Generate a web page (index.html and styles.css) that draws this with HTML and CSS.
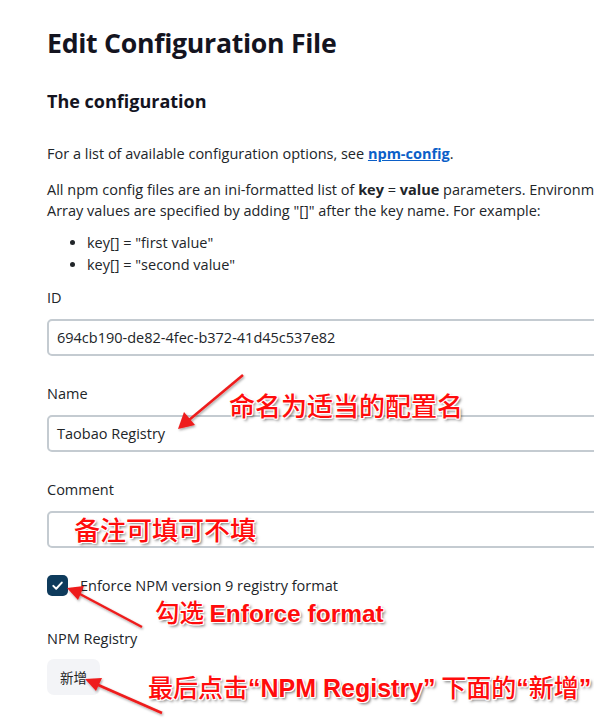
FILE: index.html
```html
<!DOCTYPE html>
<html lang="en">
<head>
<meta charset="utf-8">
<title>Edit Configuration File</title>
<link rel="stylesheet" href="styles.css">
</head>
<body>
<main class="page">
  <h1 class="title">Edit Configuration File</h1>
  <h2 class="subtitle">The configuration</h2>
  <p class="text first">For a list of available configuration options, see <a class="link" href="#">npm-config</a>.</p>
  <p class="text second">All npm config files are an ini-formatted list of <b>key</b> = <b>value</b> parameters. Environment variables can be replaced using ${VARIABLE_NAME} syntax.<br>Array values are specified by adding "[]" after the key name. For example:</p>
  <ul class="list">
    <li>key[] = "first value"</li>
    <li>key[] = "second value"</li>
  </ul>

  <div class="field">
    <label class="label">ID</label>
    <div class="input">694cb190-de82-4fec-b372-41d45c537e82</div>
  </div>
  <div class="field">
    <label class="label">Name</label>
    <div class="input">Taobao Registry</div>
  </div>
  <div class="field">
    <label class="label">Comment</label>
    <div class="input"></div>
  </div>
  <div class="check-row">
    <span class="checkbox"><svg viewBox="0 0 21 21" width="21" height="21"><path d="M6.3 10.9l2.9 2.8 5.6-6.1" fill="none" stroke="#fff" stroke-width="2" stroke-linecap="round" stroke-linejoin="round"/></svg></span>
    <span class="check-label">Enforce NPM version 9 registry format</span>
  </div>
  <div class="field registry">
    <label class="label">NPM Registry</label>
    <button class="btn">新增</button>
  </div>
</main>

<svg class="arrows" width="594" height="722" viewBox="0 0 594 722">
  <defs>
    <filter id="sh" x="-20%" y="-20%" width="140%" height="140%">
      <feDropShadow dx="1" dy="1.5" stdDeviation="1" flood-color="#000" flood-opacity="0.35"/>
    </filter>
  </defs>
  <g fill="#ee1c1c" stroke="#ee1c1c" filter="url(#sh)">
    <line x1="243" y1="375" x2="189" y2="420" stroke-width="2.5"/>
    <polygon points="178,429 184,412 195,425" stroke="none"/>
    <line x1="142" y1="627" x2="78" y2="593" stroke-width="2.5"/>
    <polygon points="67,588 84,586 78,600" stroke="none"/>
    <line x1="162" y1="713" x2="96" y2="684" stroke-width="2.5"/>
    <polygon points="85,679 102,678 96,691" stroke="none"/>
  </g>
</svg>

<div class="note note-name">命名为适当的配置名</div>
<div class="note note-comment">备注可填可不填</div>
<div class="note note-check">勾选 <span class="latin">Enforce format</span></div>
<div class="note note-add">最后点击<span class="latin">“NPM Registry”</span> 下面的<span class="latin">“</span>新增<span class="latin">”</span></div>
</body>
</html>
```
FILE: styles.css
```css
html, body {
  margin: 0;
  padding: 0;
  background: #ffffff;
  overflow: hidden;
}
body {
  width: 594px;
  height: 722px;
  position: relative;
  font-family: "Open Sans", "Noto Sans CJK SC", sans-serif;
  color: #212529;
}
.page {
  padding: 25px 0 0 47px;
  width: 760px;
}
.title {
  margin: 0;
  font-size: 26.7px;
  line-height: 36px;
  font-weight: 700;
  color: #14141f;
  letter-spacing: -0.3px;
}
.subtitle {
  margin: 28px 0 0;
  font-size: 18px;
  line-height: 24px;
  font-weight: 700;
  color: #14141f;
}
.text {
  margin: 0;
  font-size: 14.5px;
  line-height: 21px;
  white-space: nowrap;
}
.text.first {
  margin-top: 29.5px;
}
.text.second {
  margin-top: 15px;
}
.text b {
  font-weight: 700;
}
.link {
  color: #0b5fc8;
  font-weight: 700;
  text-decoration: underline;
}
.list {
  margin: 11.5px 0 0;
  padding-left: 40px;
  font-size: 14.5px;
  line-height: 22px;
}
.field {
  margin-top: 28px;
  display: flex;
  flex-direction: column;
  align-items: flex-start;
}
.list + .field {
  margin-top: 12px;
}
.label {
  font-size: 14.5px;
  line-height: 20px;
  margin-bottom: 11px;
}
.input {
  box-sizing: border-box;
  width: 700px;
  height: 37px;
  border: 2px solid #c4cbd1;
  border-radius: 5px;
  padding: 0 8px;
  font-size: 14.5px;
  line-height: 33px;
}
.check-row {
  display: flex;
  align-items: center;
  gap: 12px;
  margin-top: 27px;
}
.checkbox {
  width: 21px;
  height: 21px;
  border-radius: 5px;
  background: #0e3b5c;
  display: flex;
}
.check-label {
  font-size: 14.5px;
  line-height: 20px;
}
.field.registry {
  margin-top: 33px;
}
.registry .label {
  margin-bottom: 10px;
}
.btn {
  box-sizing: border-box;
  height: 36px;
  width: 53px;
  padding: 0;
  border: none;
  border-radius: 7px;
  background: #f3f4f7;
  font-family: "Noto Sans CJK SC", sans-serif;
  font-size: 13.5px;
  color: #222;
}
.arrows {
  position: absolute;
  left: 0;
  top: 0;
}
.note {
  position: absolute;
  color: #ff0c0c;
  font-family: "Noto Sans CJK SC", sans-serif;
  font-weight: 500;
  font-size: 26px;
  line-height: 30px;
  white-space: nowrap;
  text-shadow: 1px 0 0 #fff, -1px 0 0 #fff, 0 1px 0 #fff, 0 -1px 0 #fff,
    1px 1px 0 #fff, -1px -1px 0 #fff, 1px -1px 0 #fff, -1px 1px 0 #fff,
    2px 2px 3px rgba(0, 0, 0, 0.6);
}
.note .latin {
  font-family: "Liberation Sans", Arial, sans-serif;
  font-weight: 700;
}
.note-name { left: 229px; top: 390px; }
.note-comment { left: 74px; top: 514px; }
.note-check { left: 155px; top: 597px; font-size: 24.5px; }
.note-add { left: 148px; top: 671px; font-size: 25px; }
```
